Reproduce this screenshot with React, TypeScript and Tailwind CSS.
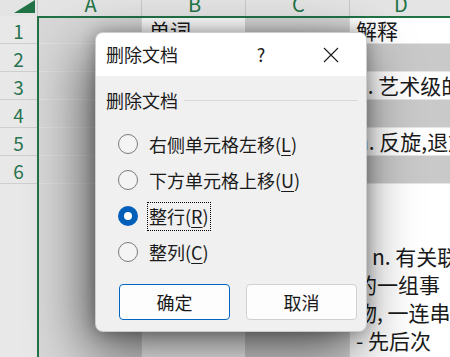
import React from "react";

type SheetRow = { n: string; b?: string; d?: string; band: boolean };

const rows: SheetRow[] = [
  { n: "1", b: "单词", d: "解释", band: false },
  { n: "2", band: true },
  { n: "3", d: "a. 艺术级的", band: false },
  { n: "4", band: true },
  { n: "5", d: "n. 反旋,退旋", band: false },
  { n: "6", band: true },
];

function Radio({ label, mn, checked, focused }: { label: string; mn: string; checked?: boolean; focused?: boolean }) {
  return (
    <div className="flex h-[36px] items-center pl-[22px]">
      {checked ? (
        <span className="flex h-[20px] w-[20px] shrink-0 items-center justify-center rounded-full bg-[#005fb8]">
          <span className="h-[8px] w-[8px] rounded-full bg-white" />
        </span>
      ) : (
        <span className="h-[20px] w-[20px] shrink-0 rounded-full border border-[#7a7a7a] bg-[#f4f4f4]" />
      )}
      <span
        className={`ml-[9px] flex h-[29px] items-center border px-[1px] text-[18px] leading-none ${
          focused ? "border-dotted border-black" : "border-transparent"
        }`}
      >
        {label}(<span className="underline underline-offset-[3px]">{mn}</span>)
      </span>
    </div>
  );
}

export default function App() {
  return (
    <div className="relative h-[357px] w-[450px] overflow-hidden bg-white font-['Noto_Sans_CJK_SC',sans-serif] text-[#1a1a1a]">
      {/* column headers */}
      <div className="flex h-[16px] bg-[#e4e4e4] text-[20px] leading-[8px] text-[#217346]">
        <div className="flex w-[38px] shrink-0 items-end justify-end border-r border-[#c8c8c8] pb-[3px] pr-[2px]">
          <svg width="21" height="13" viewBox="0 0 21 13">
            <polygon points="0,13 21,13 21,0" fill="#217346" />
          </svg>
        </div>
        {["A", "B", "C"].map((c) => (
          <div key={c} className="w-[104px] shrink-0 border-r border-[#c8c8c8] pl-[2px] text-center">
            {c}
          </div>
        ))}
        <div className="min-w-0 flex-1 pl-[2px] text-center">D</div>
      </div>

      {/* body */}
      <div className="flex h-[341px]">
        <div className="w-[37px] shrink-0 bg-[#e8e8e8] text-[19px] text-[#2a7450]">
          {rows.map((r) => (
            <div key={r.n} className="h-[28px] border-b border-[#cfcfcf] pt-[2px] text-center leading-[26px]">
              {r.n}
            </div>
          ))}
        </div>
        <div className="flex min-w-0 flex-1 flex-col border-l-2 border-t-2 border-[#217346] text-[21px]">
          {rows.map((r, i) => (
            <div key={r.n} className={`flex ${i === 0 ? "h-[26px]" : "h-[28px]"}`}>
              <div className="w-[103px] shrink-0 border-b border-r border-[#e0e0e0] bg-[#d8d8d8]" />
              <div
                className={`flex w-[104px] shrink-0 items-center border-b border-r border-[#dadada] pl-[7px] ${
                  r.band ? "bg-[#c9c9c9]" : "bg-white"
                }`}
              >
                {r.b}
              </div>
              <div className="w-[104px] shrink-0 border-b border-r border-[#e0e0e0] bg-[#d8d8d8]" />
              <div
                className={`flex min-w-0 flex-1 items-center overflow-hidden whitespace-nowrap border-b border-[#e6e6e6] pl-[6px] ${
                  r.band ? "bg-[#c9c9c9]" : "bg-white"
                }`}
              >
                {r.d}
              </div>
            </div>
          ))}
          <div className="flex flex-1">
            <div className="w-[103px] shrink-0 border-r border-[#e0e0e0] bg-[#d8d8d8]" />
            <div className="w-[104px] shrink-0 border-r border-[#dadada] bg-white" />
            <div className="w-[104px] shrink-0 border-r border-[#e0e0e0] bg-[#d8d8d8]" />
            <div className="min-w-0 flex-1 overflow-hidden whitespace-nowrap bg-white pl-[6px] pt-[58px] leading-[28px]">
              <div className="pl-[16px]">n. 有关联的</div>
              <div>的一组事</div>
              <div>物, 一连串</div>
              <div>- 先后次</div>
            </div>
          </div>
        </div>
      </div>

      {/* dialog */}
      <div className="absolute left-[95px] top-[32px] flex h-[300px] w-[272px] flex-col overflow-hidden rounded-[8px] border border-black/15 bg-[#f0f0f0] shadow-[-8px_20px_56px_rgba(0,0,0,0.62),0_0_16px_rgba(0,0,0,0.3)]">
        <div className="flex h-[43px] items-center bg-white pl-[10px] pr-[12px]">
          <div className="flex-1 text-[18px]">删除文档</div>
          <div className="w-[40px] text-center text-[18px]">?</div>
          <div className="w-[27px]" />
          <div className="flex w-[46px] justify-center">
            <svg width="16" height="16" viewBox="0 0 16 16">
              <path d="M1 1L15 15M15 1L1 15" stroke="#1a1a1a" strokeWidth="1.1" />
            </svg>
          </div>
        </div>
        <div className="flex flex-1 flex-col pt-[12px]">
          <div className="flex h-[24px] items-center pl-[10px] pr-[8px]">
            <span className="text-[18px] leading-none">删除文档</span>
            <span className="ml-[6px] h-px flex-1 bg-[#d8d8d8]" />
          </div>
          <div className="mt-[14px]">
            <Radio label="右侧单元格左移" mn="L" />
            <Radio label="下方单元格上移" mn="U" />
            <Radio label="整行" mn="R" checked focused />
            <Radio label="整列" mn="C" />
          </div>
          <div className="mt-[14px] flex gap-[16px] pl-[23px]">
            <button className="h-[36px] w-[111px] rounded-[4px] border border-[#0067c0] bg-[#fdfdfd] text-[18px]">
              确定
            </button>
            <button className="h-[36px] w-[111px] rounded-[4px] border border-[#d0d0d0] bg-[#fdfdfd] text-[18px]">
              取消
            </button>
          </div>
        </div>
      </div>
    </div>
  );
}
